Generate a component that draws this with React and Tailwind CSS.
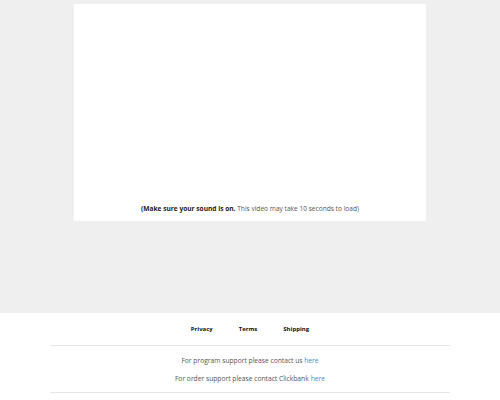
export default function App() {
  const font = { fontFamily: '"Open Sans", "Liberation Sans", sans-serif' };
  return (
    <div className="w-[500px] h-[400px] bg-white" style={font}>
      <section className="h-[313px] bg-[#efefef] pt-[4px]">
        <div className="mx-auto w-[352px] h-[217px] bg-white flex flex-col justify-end items-center pb-[7px]">
          <p className="text-[6.6px] leading-[10px] text-[#555]">
            <span className="font-bold text-[#222]">(Make sure your sound is on.</span> This video may take 10 seconds to load)
          </p>
        </div>
      </section>
      <footer className="bg-white">
        <nav className="flex justify-center gap-[26px] pt-[11px] h-[32px]">
          <a className="text-[6px] leading-[10px] font-bold text-[#111]">Privacy</a>
          <a className="text-[6px] leading-[10px] font-bold text-[#111]">Terms</a>
          <a className="text-[6px] leading-[10px] font-bold text-[#111]">Shipping</a>
        </nav>
        <hr className="mx-[50px] border-t border-[#e6e6e6]" />
        <div className="flex flex-col items-center text-[6.7px] leading-[10px] text-[#555] pt-[10px] gap-[8px]">
          <p>For program support please contact us <a className="text-[#3b8fd0]">here</a></p>
          <p>For order support please contact Clickbank<a className="ml-[2px] text-[#3b8fd0]">here</a></p>
        </div>
        <hr className="mx-[50px] mt-[8px] border-t border-[#e6e6e6]" />
      </footer>
    </div>
  );
}
